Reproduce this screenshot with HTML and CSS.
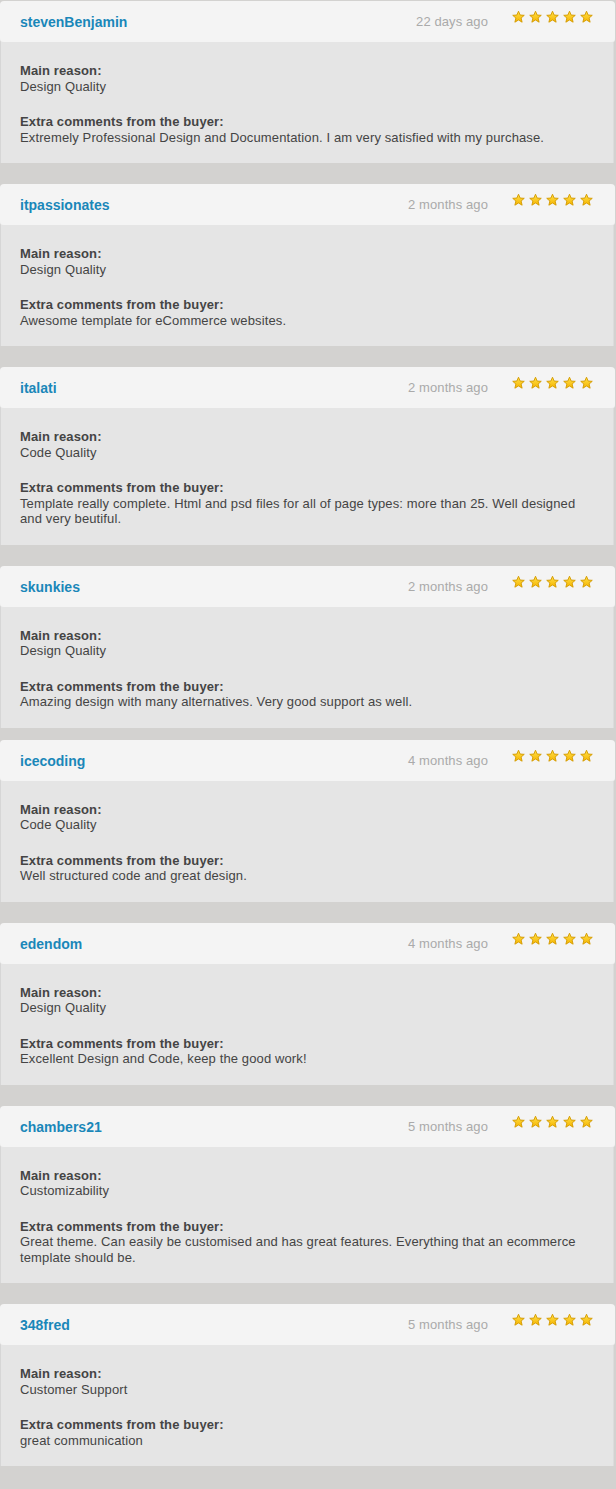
FILE: index.html
```html
<!DOCTYPE html>
<html>
<head>
<meta charset="utf-8">
<link rel="stylesheet" href="styles.css">
</head>
<body>
<svg width="0" height="0" class="defs" aria-hidden="true">
  <defs>
    <linearGradient id="sg" x1="0" y1="0" x2="0" y2="1">
      <stop offset="0" stop-color="#ffe04a"/>
      <stop offset="1" stop-color="#f6b500"/>
    </linearGradient>
    <symbol id="star" viewBox="0 0 14 14">
      <path d="M7 0.8 L8.8 4.9 L13.2 5.2 L9.8 8.1 L10.9 12.6 L7 10.2 L3.1 12.6 L4.2 8.1 L0.8 5.2 L5.2 4.9 Z" fill="url(#sg)" stroke="#d49a00" stroke-width="1" stroke-linejoin="round"/>
    </symbol>
  </defs>
</svg>
<div class="list">

  <div class="review">
    <div class="review-head">
      <span class="user">stevenBenjamin</span>
      <span class="time">22 days ago</span>
      <span class="stars"><svg><use href="#star"/></svg><svg><use href="#star"/></svg><svg><use href="#star"/></svg><svg><use href="#star"/></svg><svg><use href="#star"/></svg></span>
    </div>
    <div class="review-body">
      <div class="group"><div class="label">Main reason:</div><div class="value">Design Quality</div></div>
      <div class="group"><div class="label">Extra comments from the buyer:</div><div class="value">Extremely Professional Design and Documentation. I am very satisfied with my purchase.</div></div>
    </div>
  </div>

  <div class="review">
    <div class="review-head">
      <span class="user">itpassionates</span>
      <span class="time">2 months ago</span>
      <span class="stars"><svg><use href="#star"/></svg><svg><use href="#star"/></svg><svg><use href="#star"/></svg><svg><use href="#star"/></svg><svg><use href="#star"/></svg></span>
    </div>
    <div class="review-body">
      <div class="group"><div class="label">Main reason:</div><div class="value">Design Quality</div></div>
      <div class="group"><div class="label">Extra comments from the buyer:</div><div class="value">Awesome template for eCommerce websites.</div></div>
    </div>
  </div>

  <div class="review">
    <div class="review-head">
      <span class="user">italati</span>
      <span class="time">2 months ago</span>
      <span class="stars"><svg><use href="#star"/></svg><svg><use href="#star"/></svg><svg><use href="#star"/></svg><svg><use href="#star"/></svg><svg><use href="#star"/></svg></span>
    </div>
    <div class="review-body">
      <div class="group"><div class="label">Main reason:</div><div class="value">Code Quality</div></div>
      <div class="group"><div class="label">Extra comments from the buyer:</div><div class="value">Template really complete. Html and psd files for all of page types: more than 25. Well designed and very beutiful.</div></div>
    </div>
  </div>

  <div class="review review--tight">
    <div class="review-head">
      <span class="user">skunkies</span>
      <span class="time">2 months ago</span>
      <span class="stars"><svg><use href="#star"/></svg><svg><use href="#star"/></svg><svg><use href="#star"/></svg><svg><use href="#star"/></svg><svg><use href="#star"/></svg></span>
    </div>
    <div class="review-body">
      <div class="group"><div class="label">Main reason:</div><div class="value">Design Quality</div></div>
      <div class="group"><div class="label">Extra comments from the buyer:</div><div class="value">Amazing design with many alternatives. Very good support as well.</div></div>
    </div>
  </div>

  <div class="review">
    <div class="review-head">
      <span class="user">icecoding</span>
      <span class="time">4 months ago</span>
      <span class="stars"><svg><use href="#star"/></svg><svg><use href="#star"/></svg><svg><use href="#star"/></svg><svg><use href="#star"/></svg><svg><use href="#star"/></svg></span>
    </div>
    <div class="review-body">
      <div class="group"><div class="label">Main reason:</div><div class="value">Code Quality</div></div>
      <div class="group"><div class="label">Extra comments from the buyer:</div><div class="value">Well structured code and great design.</div></div>
    </div>
  </div>

  <div class="review">
    <div class="review-head">
      <span class="user">edendom</span>
      <span class="time">4 months ago</span>
      <span class="stars"><svg><use href="#star"/></svg><svg><use href="#star"/></svg><svg><use href="#star"/></svg><svg><use href="#star"/></svg><svg><use href="#star"/></svg></span>
    </div>
    <div class="review-body">
      <div class="group"><div class="label">Main reason:</div><div class="value">Design Quality</div></div>
      <div class="group"><div class="label">Extra comments from the buyer:</div><div class="value">Excellent Design and Code, keep the good work!</div></div>
    </div>
  </div>

  <div class="review">
    <div class="review-head">
      <span class="user">chambers21</span>
      <span class="time">5 months ago</span>
      <span class="stars"><svg><use href="#star"/></svg><svg><use href="#star"/></svg><svg><use href="#star"/></svg><svg><use href="#star"/></svg><svg><use href="#star"/></svg></span>
    </div>
    <div class="review-body">
      <div class="group"><div class="label">Main reason:</div><div class="value">Customizability</div></div>
      <div class="group"><div class="label">Extra comments from the buyer:</div><div class="value">Great theme. Can easily be customised and has great features. Everything that an ecommerce template should be.</div></div>
    </div>
  </div>

  <div class="review">
    <div class="review-head">
      <span class="user">348fred</span>
      <span class="time">5 months ago</span>
      <span class="stars"><svg><use href="#star"/></svg><svg><use href="#star"/></svg><svg><use href="#star"/></svg><svg><use href="#star"/></svg><svg><use href="#star"/></svg></span>
    </div>
    <div class="review-body">
      <div class="group"><div class="label">Main reason:</div><div class="value">Customer Support</div></div>
      <div class="group"><div class="label">Extra comments from the buyer:</div><div class="value">great communication</div></div>
    </div>
  </div>

</div>
</body>
</html>
```

FILE: styles.css
```css
html, body {
  margin: 0;
  padding: 0;
  background: #d3d2d0;
}

body {
  font-family: "Liberation Sans", Arial, sans-serif;
  font-size: 13px;
  color: #444;
}

.defs {
  position: absolute;
  width: 0;
  height: 0;
  overflow: hidden;
}

.list {
  display: flex;
  flex-direction: column;
  gap: 21px;
  padding-top: 1px;
  padding-bottom: 26px;
  width: 614px;
}

.review--tight {
  margin-bottom: -9px;
}

.review-head {
  display: flex;
  align-items: flex-start;
  height: 41px;
  box-sizing: border-box;
  background: #f4f4f4;
  border-radius: 4px;
  padding: 0 22px 0 20px;
  margin-right: -1px;
  box-shadow: 0 1px 0 #e9e9e9;
}

.user {
  font-weight: bold;
  font-size: 14px;
  color: #1a87b9;
  line-height: 42px;
  flex: 1;
}

.time {
  color: #aaaaaa;
  font-size: 13px;
  line-height: 42px;
  margin-right: 24px;
  letter-spacing: 0.1px;
}

.stars {
  display: flex;
  gap: 4px;
  padding-top: 9px;
}

.stars svg {
  width: 13px;
  height: 14px;
  display: block;
}

.review-body {
  background: #e5e5e5;
  border-left: 1px solid #d6d6d6;
  border-right: 1px solid #dcdcdc;
  padding: 21px 19px 18px 19px;
  display: flex;
  flex-direction: column;
  gap: 20px;
  line-height: 15.5px;
  letter-spacing: 0.12px;
}

.label {
  font-weight: bold;
  color: #444;
}

.value {
  color: #444;
}
```
